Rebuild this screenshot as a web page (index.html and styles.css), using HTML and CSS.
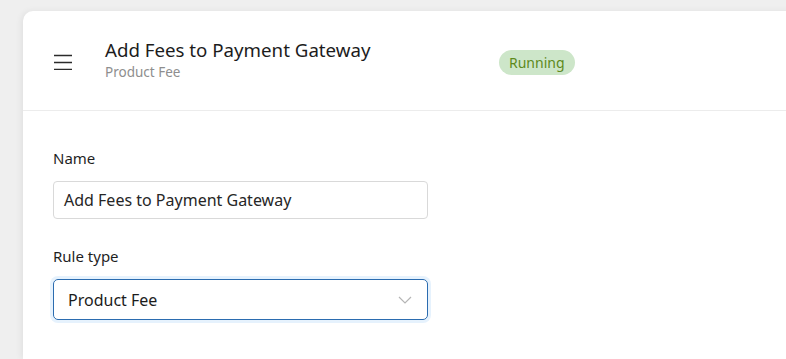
FILE: index.html
```html
<!DOCTYPE html>
<html>
<head>
<meta charset="utf-8">
<link rel="stylesheet" href="styles.css">
</head>
<body>
<div class="page">
  <div class="card">
    <header class="header">
      <button class="menu" aria-label="Menu">
        <svg width="18" height="16" viewBox="0 0 18 16"><path d="M0 1.5H18M0 8.5H18M0 15.5H18" stroke="#2b2b2b" stroke-width="1.6"/></svg>
      </button>
      <div class="titles">
        <div class="title">Add Fees to Payment Gateway</div>
        <div class="subtitle">Product Fee</div>
      </div>
      <span class="badge">Running</span>
    </header>
    <div class="body">
      <div class="field">
        <label class="label">Name</label>
        <div class="input">Add Fees to Payment Gateway</div>
      </div>
      <div class="field">
        <label class="label">Rule type</label>
        <div class="select">
          <span>Product Fee</span>
          <svg width="14" height="8" viewBox="0 0 14 8"><path d="M1 1L7 7L13 1" fill="none" stroke="#b5b5b5" stroke-width="1.2"/></svg>
        </div>
      </div>
    </div>
  </div>
</div>
</body>
</html>
```
FILE: styles.css
```css
* { box-sizing: border-box; }
html, body { margin: 0; padding: 0; }
body {
  background: #efefef;
  font-family: "Noto Sans", "Open Sans", sans-serif;
  color: #1f1f1f;
}
.page {
  padding: 11px 0 0 23px;
  height: 359px;
  overflow: hidden;
}
.card {
  background: #fff;
  border-radius: 10px 0 0 0;
  width: calc(100% + 20px);
  height: 100%;
  box-shadow: -2px 0 6px rgba(0,0,0,0.06);
}
.header {
  display: flex;
  align-items: center;
  height: 100px;
  border-bottom: 1px solid #ececec;
  padding-left: 31px;
}
.menu {
  border: 0;
  background: none;
  padding: 0;
  width: 18px;
  height: 16px;
  display: flex;
  margin-top: 3px;
}
.titles {
  margin-left: 33px;
  width: 394px;
  margin-top: -1px;
}
.title {
  font-size: 18.7px;
  line-height: 24px;
  color: #1c1c1c;
}
.subtitle {
  font-size: 13.5px;
  line-height: 20px;
  color: #8e8e8e;
}
.badge {
  display: inline-flex;
  align-items: center;
  height: 25px;
  padding: 0 10px;
  border-radius: 13px;
  background: #cde6c9;
  color: #5d8a1c;
  font-size: 14px;
  margin-top: 4px;
}
.body {
  padding: 36px 30px 0 30px;
}
.field {
  display: flex;
  flex-direction: column;
  width: 375px;
  margin-bottom: 26px;
}
.label {
  font-size: 15px;
  line-height: 22px;
  margin-bottom: 12px;
  color: #1f1f1f;
}
.input {
  height: 38px;
  border: 1px solid #d9d9d9;
  border-radius: 4px;
  padding: 0 10px;
  display: flex;
  align-items: center;
  font-size: 16px;
  color: #262626;
}
.select {
  height: 41px;
  border: 1px solid #2b6cb0;
  border-radius: 5px;
  box-shadow: 0 0 0 3px #e6f2fd;
  padding: 0 15px 0 14px;
  display: flex;
  align-items: center;
  justify-content: space-between;
  font-size: 16px;
  color: #1c1c1c;
}
```
